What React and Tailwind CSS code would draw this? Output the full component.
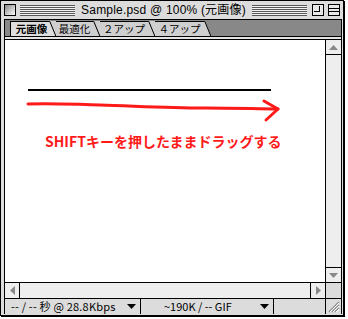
import React from "react";

const jp = "font-['Noto_Sans_CJK_JP',sans-serif]";

const Stripes = ({ className = "" }) => (
  <div
    className={`h-[11px] bg-[repeating-linear-gradient(to_bottom,#555_0_1px,#f4f4f4_1px_2px)] ${className}`}
  />
);

const DownTri = ({ color = "#000" }) => (
  <svg width="9" height="5" viewBox="0 0 9 5">
    <path d="M0 0H9L4.5 5Z" fill={color} />
  </svg>
);

const Tab = ({ label, active, next, width }) => (
  <div className="flex items-stretch h-full">
    <div
      className={`flex items-center justify-center border-t border-black ${
        active ? "bg-[#dedede] font-bold" : "bg-[#cfcfcf]"
      } ${width} text-[10.5px] leading-none ${jp}`}
    >
      {label}
    </div>
    <svg width="7" height="15" viewBox="0 0 7 15" className="block">
      <path d="M0 0H1L7 15H0Z" fill={active ? "#dedede" : "#cfcfcf"} />
      <path d="M1 0L7 15V0Z" fill={next} />
      <path d="M0 0.5H0.8L6.8 15" stroke="#000" strokeWidth="1" fill="none" />
    </svg>
  </div>
);

export default function App() {
  return (
    <div className="w-[348px] h-[319px] bg-white">
      <div className="w-[344px] h-[316px] border border-black bg-[#dcdcdc] shadow-[1px_1px_0_#000] flex flex-col">
        {/* Title bar */}
        <div className="h-[18px] flex items-center px-[3px] gap-[4px]">
          <div className="w-[12px] h-[12px] border border-black bg-[linear-gradient(135deg,#888,#fff)]" />
          <Stripes className="flex-1" />
          <span className="text-[12px] leading-none text-black font-['Liberation_Sans','Noto_Sans_CJK_JP',sans-serif] tracking-[0.2px] px-[2px]">
            Sample.psd @ 100% (元画像)
          </span>
          <Stripes className="flex-1" />
          <div className="w-[12px] h-[12px] border border-black bg-[#e8e8e8] relative ml-[1px]">
            <div className="absolute left-[1px] top-[1px] w-[6px] h-[6px] border-r border-b border-black" />
          </div>
          <div className="w-[12px] h-[12px] border border-black bg-[#e8e8e8] flex items-center">
            <div className="w-full h-[4px] border-y border-black" />
          </div>
        </div>

        {/* Inner panel */}
        <div className="flex-1 ml-[3px] mr-[1px] mb-[1px] border-x border-t border-black flex flex-col">
          {/* Tabs */}
          <div className="h-[17px] bg-[#888] border-b border-black flex items-end pl-[5px]">
            <div className="h-[15px] flex border-l border-black">
              <Tab label="元画像" active next="#cfcfcf" width="w-[38px] pl-[3px]" />
              <Tab label="最適化" next="#cfcfcf" width="w-[37px]" />
              <Tab label="２アップ" next="#cfcfcf" width="w-[48px]" />
              <Tab label="４アップ" next="#888" width="w-[49px]" />
            </div>
          </div>
          <div className="h-[2px] bg-[#e4e4e4] border-b border-black box-content" />

          {/* Canvas + vertical scrollbar */}
          <div className="flex-1 flex min-h-0">
            <div className="flex-1 bg-white relative">
              <svg width="321" height="200" className="absolute left-0 top-0">
                <rect x="23" y="49" width="243" height="2" fill="#000" />
                <path
                  d="M23 64 C45 63 60 64 95 65 C130 66 160 68 200 68 C230 68 255 69 273 69"
                  stroke="#ff1a1a"
                  strokeWidth="3"
                  fill="none"
                  strokeLinecap="round"
                />
                <path
                  d="M259 61 L273 69 L261 80"
                  stroke="#ff1a1a"
                  strokeWidth="3"
                  fill="none"
                  strokeLinecap="round"
                  strokeLinejoin="round"
                />
              </svg>
              <div className={`absolute left-[40px] top-[94px] text-[14px] font-bold text-[#ff1a1a] leading-none ${jp}`}>
                SHIFTキーを押したままドラッグする
              </div>
            </div>
            <div className="w-[16px] border-l border-black bg-[#eeeeee] flex flex-col justify-between">
              <div className="h-[15px] border-b border-black flex items-center justify-center">
                <svg width="9" height="5" viewBox="0 0 9 5">
                  <path d="M0 5H9L4.5 0Z" fill="#888" />
                </svg>
              </div>
              <div className="h-[15px] border-t border-black flex items-center justify-center">
                <DownTri color="#888" />
              </div>
            </div>
          </div>

          {/* Horizontal scrollbar */}
          <div className="h-[16px] border-t border-black flex">
            <div className="flex-1 bg-[#eeeeee] flex justify-between">
              <div className="w-[15px] border-r border-black flex items-center justify-center">
                <svg width="5" height="9" viewBox="0 0 5 9">
                  <path d="M5 0V9L0 4.5Z" fill="#888" />
                </svg>
              </div>
              <div className="w-[15px] border-l border-black flex items-center justify-center">
                <svg width="5" height="9" viewBox="0 0 5 9">
                  <path d="M0 0V9L5 4.5Z" fill="#888" />
                </svg>
              </div>
            </div>
            <div className="w-[16px] border-l border-black bg-[#dcdcdc]" />
          </div>

          {/* Status bar */}
          <div className={`h-[16px] border-t border-black flex bg-[#dcdcdc] text-[11px] leading-none text-black ${jp}`}>
            <div className="w-[136px] border-r border-black flex items-center justify-between pl-[6px] pr-[4px]">
              <span className="tracking-[0.2px]">-- / -- 秒 @ 28.8Kbps</span>
              <DownTri />
            </div>
            <div className="w-[133px] border-r border-black flex items-center justify-between pl-[23px] pr-[4px]">
              <span>~190K / -- GIF</span>
              <DownTri />
            </div>
            <div className="flex-1" />
            <div className="w-[16px] border-l border-black flex items-center justify-center">
              <svg width="12" height="12" viewBox="0 0 12 12">
                <path d="M1 11L11 1M4 11L11 4M7 11L11 7" stroke="#888" strokeWidth="1.5" />
                <path d="M2 11L11 2M5 11L11 5M8 11L11 8" stroke="#fff" strokeWidth="1" />
              </svg>
            </div>
          </div>
        </div>
      </div>
    </div>
  );
}
